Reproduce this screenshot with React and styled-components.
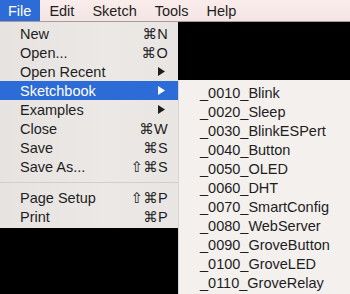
import React from 'react';
import styled, { createGlobalStyle } from 'styled-components';

const GlobalStyle = createGlobalStyle`
  html, body {
    margin: 0;
    padding: 0;
    background: #000;
  }
`;

const Screen = styled.div`
  width: 350px;
  height: 294px;
  overflow: hidden;
  background: #000;
  font-family: "Liberation Sans", Arial, "DejaVu Sans", sans-serif;
  font-size: 14.5px;
  color: #1e1e1e;
`;

const MenuBar = styled.div`
  display: flex;
  height: 21px;
  background: linear-gradient(#f9ecea, #f3e5e3);
  border-bottom: 1px solid #a99b99;
`;

const BarItem = styled.div`
  display: flex;
  align-items: center;
  padding: 0 9px 0 ${p => (p.first ? '8px' : '9px')};
  background: ${p => (p.active ? '#2d6bd6' : 'transparent')};
  color: ${p => (p.active ? '#fff' : '#1e1e1e')};
`;

const Stage = styled.div`
  display: flex;
  align-items: flex-start;
`;

const Menu = styled.div`
  width: 178px;
  flex-shrink: 0;
  padding: 2px 0;
  background: linear-gradient(90deg, #e6e3e1, #ebe8e6 60%, #e8e5e3);
`;

const SubMenu = styled.div`
  flex: 1;
  margin-top: 58px;
  padding: 3px 0 2px;
  background: #f3f0ee;
  border-left: 1px solid #d8d4d2;
`;

const Row = styled.div`
  display: flex;
  align-items: center;
  justify-content: space-between;
  height: 19px;
  padding: 0 10px 0 20px;
  background: ${p => (p.active ? '#2d6bd6' : 'transparent')};
  color: ${p => (p.active ? '#fff' : '#1e1e1e')};
`;

const SubRow = styled.div`
  display: flex;
  align-items: center;
  height: 19px;
  padding-left: 21px;
  white-space: nowrap;
`;

const Shortcut = styled.span`
  font-family: "Liberation Sans", "DejaVu Sans", sans-serif;
  font-size: 14.5px;
  letter-spacing: 0.3px;
`;

const Separator = styled.div`
  height: 12px;
  display: flex;
  align-items: center;

  &::after {
    content: '';
    flex: 1;
    height: 1px;
    background: #d2cecc;
  }
`;

const Arrow = ({ color }) => (
  <svg width="7" height="9" viewBox="0 0 7 9" style={{ marginRight: 3 }}>
    <polygon points="0,0 7,4.5 0,9" fill={color} />
  </svg>
);

const fileItems = [
  { label: 'New', key: '⌘N' },
  { label: 'Open...', key: '⌘O' },
  { label: 'Open Recent', sub: true },
  { label: 'Sketchbook', sub: true, active: true },
  { label: 'Examples', sub: true },
  { label: 'Close', key: '⌘W' },
  { label: 'Save', key: '⌘S' },
  { label: 'Save As...', key: '⇧⌘S' },
  { sep: true },
  { label: 'Page Setup', key: '⇧⌘P' },
  { label: 'Print', key: '⌘P' },
];

const sketches = [
  '_0010_Blink',
  '_0020_Sleep',
  '_0030_BlinkESPert',
  '_0040_Button',
  '_0050_OLED',
  '_0060_DHT',
  '_0070_SmartConfig',
  '_0080_WebServer',
  '_0090_GroveButton',
  '_0100_GroveLED',
  '_0110_GroveRelay',
];

export default function App() {
  return (
    <Screen>
      <GlobalStyle />
      <MenuBar>
        <BarItem first active>File</BarItem>
        <BarItem>Edit</BarItem>
        <BarItem>Sketch</BarItem>
        <BarItem>Tools</BarItem>
        <BarItem>Help</BarItem>
      </MenuBar>
      <Stage>
        <Menu>
          {fileItems.map((item, i) =>
            item.sep ? (
              <Separator key={i} />
            ) : (
              <Row key={i} active={item.active}>
                <span>{item.label}</span>
                {item.sub ? (
                  <Arrow color={item.active ? '#fff' : '#1e1e1e'} />
                ) : (
                  <Shortcut>{item.key}</Shortcut>
                )}
              </Row>
            )
          )}
        </Menu>
        <SubMenu>
          {sketches.map(name => (
            <SubRow key={name}>{name}</SubRow>
          ))}
        </SubMenu>
      </Stage>
    </Screen>
  );
}
